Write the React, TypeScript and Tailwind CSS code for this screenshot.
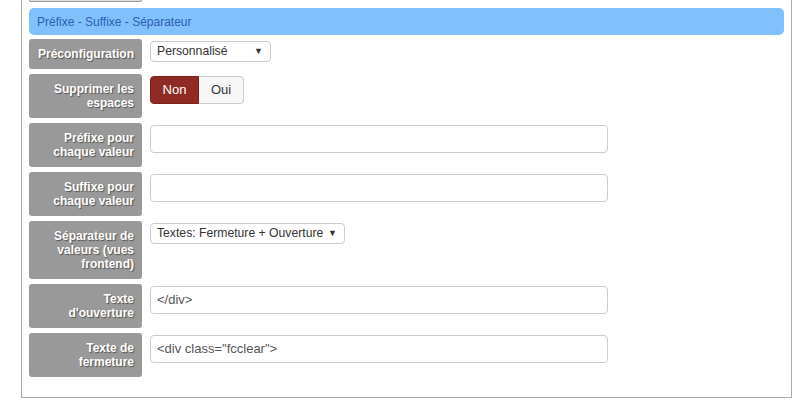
import React from 'react';

const font = { fontFamily: '"Liberation Sans", Arial, sans-serif' };

function Label({ lines }: { lines: string[] }) {
  return (
    <div className="w-[113px] shrink-0 rounded-[3px] bg-[#999999] px-[8px] py-[8px] text-right text-[12px] font-bold leading-[14px] text-white [text-shadow:1px_1px_1px_rgba(0,0,0,0.45)]">
      {lines.map((l, i) => (
        <div key={i}>{l}</div>
      ))}
    </div>
  );
}

function FakeSelect({ value, width }: { value: string; width: string }) {
  return (
    <div
      className={`mt-[2px] flex h-[21px] items-center justify-between whitespace-nowrap rounded-[4px] border border-[#cccccc] bg-white pl-[6px] pr-[7px] text-[12.2px] text-[#333] ${width}`}
    >
      <span>{value}</span>
      <span className="text-[9px] text-[#333]">▼</span>
    </div>
  );
}

function TextField({ value }: { value?: string }) {
  return (
    <div className="mt-[2px] flex h-[28px] w-[458px] items-center whitespace-nowrap rounded-[4px] border border-[#cccccc] bg-white px-[6px] text-[13px] text-[#555]">
      {value}
    </div>
  );
}

export default function App() {
  return (
    <div className="min-h-[408px] bg-white" style={font}>
      <div className="ml-[21px] w-[771px] border-x border-b border-[#aaaaaa] px-[7px] pb-[20px]">
        <div className="h-[2px] w-[113px] rounded-b-[3px] border-x border-b border-[#999] bg-[#dddddd]" />
        <div className="mt-[6px] flex h-[27px] items-center rounded-[5px] bg-[#80c0ff] px-[8px] text-[12px] text-[#2d5db3]">
          Préfixe - Suffixe - Séparateur
        </div>
        <div className="mt-[4px] flex flex-col gap-[5px]">
          <div className="flex gap-[8px]">
            <Label lines={['Préconfiguration']} />
            <FakeSelect value="Personnalisé" width="w-[121px]" />
          </div>
          <div className="flex gap-[8px]">
            <Label lines={['Supprimer les', 'espaces']} />
            <div className="mt-[2px] flex h-[28px] text-[13px]">
              <div className="flex w-[49px] items-center justify-center rounded-l-[4px] border border-[#7a211b] bg-[#8f2b24] text-white">
                Non
              </div>
              <div className="flex w-[45px] items-center justify-center rounded-r-[4px] border border-l-0 border-[#cccccc] bg-[#f7f7f7] text-[#333]">
                Oui
              </div>
            </div>
          </div>
          <div className="flex gap-[8px]">
            <Label lines={['Préfixe pour', 'chaque valeur']} />
            <TextField />
          </div>
          <div className="flex gap-[8px]">
            <Label lines={['Suffixe pour', 'chaque valeur']} />
            <TextField />
          </div>
          <div className="flex gap-[8px]">
            <Label lines={['Séparateur de', 'valeurs (vues', 'frontend)']} />
            <FakeSelect value="Textes: Fermeture + Ouverture" width="w-[195px]" />
          </div>
          <div className="flex gap-[8px]">
            <Label lines={['Texte', "d'ouverture"]} />
            <TextField value="</div>" />
          </div>
          <div className="flex gap-[8px]">
            <Label lines={['Texte de', 'fermeture']} />
            <TextField value={'<div class="fcclear">'} />
          </div>
        </div>
      </div>
    </div>
  );
}
